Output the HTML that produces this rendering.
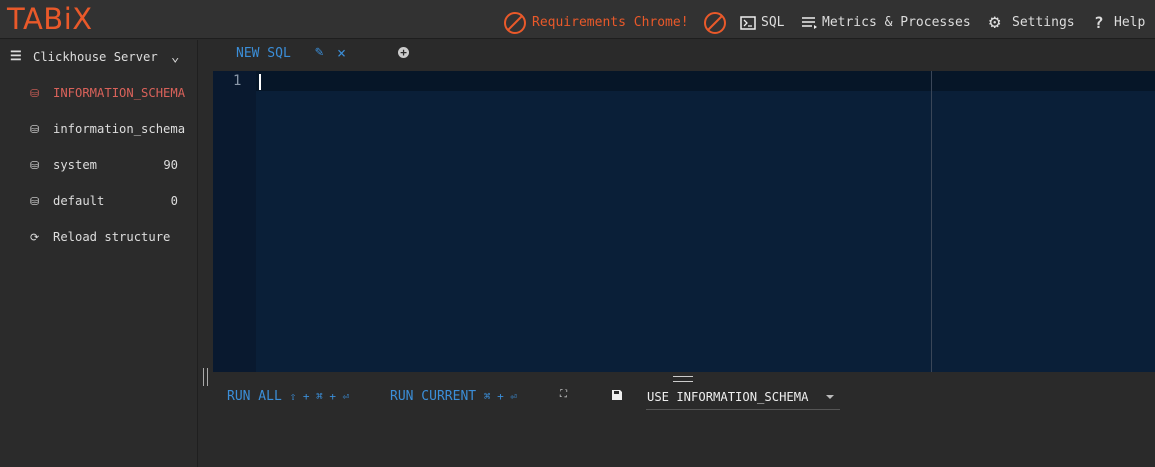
<!DOCTYPE html>
<html><head><meta charset="utf-8"><style>
*{margin:0;padding:0;box-sizing:border-box}
body{width:1155px;height:467px;background:#2a2a2a;font-family:"DejaVu Sans Mono","Liberation Mono",monospace;font-size:13px;color:#ddd;position:relative;overflow:hidden}
.hdr{position:absolute;left:0;top:0;width:1155px;height:39px;background:#323232;border-bottom:1px solid #1e1e1e}
.logo{position:absolute;left:7px;top:2px;font-family:"DejaVu Sans","Liberation Sans",sans-serif;font-size:29px;color:#e9592a;letter-spacing:0.5px}
.ab{position:absolute;top:0;height:39px;line-height:46px;white-space:nowrap}
.side{position:absolute;left:0;top:40px;width:198px;height:427px;background:#2b2b2b;border-right:1px solid #1f1f1f;font-size:12.2px}
.it{position:absolute;left:30px;height:20px;white-space:nowrap}
.it span.ic{position:absolute;left:0;top:1px;font-size:11px}
.it span.t{position:absolute;left:23px}
.num{position:absolute;right:20px}
.ed{position:absolute;left:213px;top:71px;width:942px;height:301px;background:#0a1f38}
.gut{position:absolute;left:0;top:0;width:43px;height:301px;background:#09192f}
.act{position:absolute;left:43px;top:0;right:0;height:20px;background:#061628}
.blue{color:#3b8ed8}
</style></head><body>
<div class="hdr">
<div class="logo">TABiX</div>
<svg style="position:absolute;left:503px;top:11px" width="24" height="24"><circle cx="12" cy="12" r="10" fill="none" stroke="#e9592a" stroke-width="2"/><line x1="5" y1="19" x2="19" y2="5" stroke="#e9592a" stroke-width="2"/></svg>
<div class="ab" style="left:532px;color:#e9592a">Requirements Chrome!</div>
<svg style="position:absolute;left:703px;top:11px" width="24" height="24"><circle cx="12" cy="12" r="10" fill="none" stroke="#e9592a" stroke-width="2"/><line x1="5" y1="19" x2="19" y2="5" stroke="#e9592a" stroke-width="2"/></svg>
<svg style="position:absolute;left:740px;top:16px" width="16" height="14"><rect x="1" y="1" width="14" height="12" fill="none" stroke="#eee" stroke-width="1.5"/><path d="M4 4l3 3-3 3M8 10h4" stroke="#eee" fill="none" stroke-width="1.3"/></svg>
<div class="ab" style="left:761px">SQL</div>
<svg style="position:absolute;left:802px;top:17px" width="16" height="12"><path d="M0 1h13M0 5h13M0 9h10" stroke="#eee" stroke-width="1.5"/><path d="M12 8l3 2-3 2z" fill="#eee"/></svg>
<div class="ab" style="left:822px">Metrics &amp; Processes</div>
<div class="ab" style="left:989px;font-size:19px;line-height:44px">⚙</div>
<div class="ab" style="left:1012px">Settings</div>
<div class="ab" style="left:1094px;font-size:16px;line-height:45px;font-weight:bold">?</div>
<div class="ab" style="left:1114px">Help</div>
</div>
<div class="side">
<div class="it" style="left:10px;top:10px"><span class="ic" style="font-size:13px;top:-1px;font-weight:bold">☰</span><span class="t" style="left:23px">Clickhouse Server</span><span style="position:absolute;left:161px;top:-1px;font-size:14px">⌄</span></div>
<div class="it" style="top:46px;color:#d9625a"><span class="ic">⛁</span><span class="t">INFORMATION_SCHEMA</span></div>
<div class="it" style="top:82px"><span class="ic">⛁</span><span class="t">information_schema</span></div>
<div class="it" style="top:118px;width:168px"><span class="ic">⛁</span><span class="t">system</span><span class="num" style="right:20px">90</span></div>
<div class="it" style="top:154px;width:168px"><span class="ic">⛁</span><span class="t">default</span><span class="num" style="right:20px">0</span></div>
<div class="it" style="top:190px"><span class="ic">⟳</span><span class="t">Reload structure</span></div>
</div>
<div class="blue" style="position:absolute;left:236px;top:46px">NEW SQL</div>
<div class="blue" style="position:absolute;left:315px;top:44px;font-size:14px">✎</div>
<div class="blue" style="position:absolute;left:337px;top:44px;font-size:15px">×</div>
<div style="position:absolute;left:398px;top:47px;width:11px;height:11px;border-radius:50%;background:#ccc;color:#2a2a2a;font-size:11px;line-height:11px;text-align:center;font-weight:bold">+</div>
<div class="ed"><div class="gut"></div><div class="act"></div>
<div style="position:absolute;left:20px;top:2px;color:#8a97a8;font-size:14px">1</div>
<div style="position:absolute;left:46px;top:3px;width:2px;height:16px;background:#fff"></div>
<div style="position:absolute;left:718px;top:0;width:1px;height:301px;background:#3a4658"></div>
</div>
<div style="position:absolute;left:203px;top:368px;width:1px;height:18px;background:#aaa"></div>
<div style="position:absolute;left:207px;top:368px;width:1px;height:18px;background:#aaa"></div>
<div style="position:absolute;left:673px;top:376px;width:20px;height:1px;background:#ccc"></div>
<div style="position:absolute;left:673px;top:381px;width:20px;height:1px;background:#ccc"></div>
<div class="blue" style="position:absolute;left:227px;top:389px">RUN ALL <span style="font-size:11px">⇧ + ⌘ + ⏎</span></div>
<div class="blue" style="position:absolute;left:390px;top:389px">RUN CURRENT <span style="font-size:11px">⌘ + ⏎</span></div>
<div style="position:absolute;left:560px;top:389px;font-size:10px">⛶</div>
<svg style="position:absolute;left:612px;top:390px" width="10" height="10"><path d="M0 0h8l2 2v8H0z" fill="#eee"/><rect x="2" y="1" width="5" height="3" fill="#2a2a2a"/></svg>
<div style="position:absolute;left:647px;top:390px;color:#eee;font-size:12.2px">USE INFORMATION_SCHEMA</div>
<div style="position:absolute;left:826px;top:395px;width:0;height:0;border-left:4px solid transparent;border-right:4px solid transparent;border-top:4px solid #bbb"></div>
<div style="position:absolute;left:646px;top:409px;width:194px;height:1px;background:#555"></div>
</body></html>
